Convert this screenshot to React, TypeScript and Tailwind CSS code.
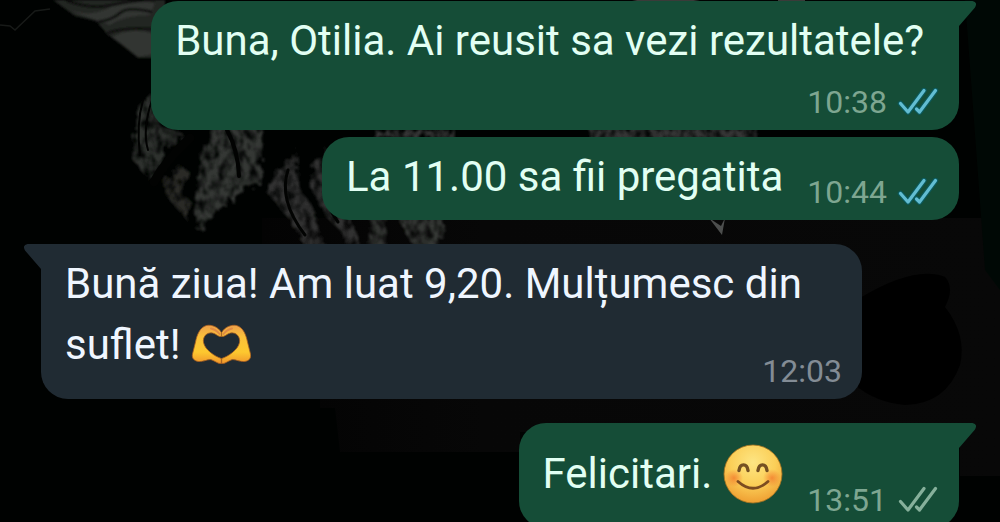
import React from "react";
import clsx from "clsx";

type Status = "read" | "delivered";

type MessageProps = {
  children: React.ReactNode;
  time: string;
  status?: Status;
  tail?: boolean;
  // where the time goes: on its own row, beside the text, or floated under the last line
  meta: "below" | "beside" | "inline";
  className?: string;
};

const Ticks: React.FC<{ status: Status }> = ({ status }) => (
  <svg
    role="img"
    aria-label={status}
    viewBox="0 0 42 28"
    className={clsx("h-7 w-[42px] shrink-0", status === "read" ? "text-[#62bdd2]" : "text-[#86b09b]")}
    fill="none"
    strokeWidth="3.2"
    strokeLinecap="round"
    strokeLinejoin="round"
  >
    {status === "read" && (
      <path d="M3.500 15.500 11 24 27 2.500M19.500 21 22.500 24 38.500 2.500" stroke="#0b5a5c" strokeWidth="5.5" />
    )}
    <path d="M3.500 15.500 11 24 27 2.500" stroke="currentColor" />
    <path d="M19.500 21 22.500 24 38.500 2.500" stroke="currentColor" />
  </svg>
);

const HeartHands = () => (
  <svg role="img" aria-label="heart hands" viewBox="0 3 60 60" className="-my-2 inline-block size-[60px] align-middle">
    <defs>
      <linearGradient id="hand" x1="0" y1="0" x2="0" y2="1">
        <stop offset="0" stopColor="#eda04a" />
        <stop offset="0.3" stopColor="#fbc13a" />
        <stop offset="0.7" stopColor="#fdc82f" />
        <stop offset="1" stopColor="#f0952c" />
      </linearGradient>
    </defs>
    {[undefined, "translate(61 0) scale(-1 1)"].map((transform, i) => (
      <g key={i} transform={transform}>
        <path
          d="M30.300 17.500C27 11.500 20 9.500 15.500 10.500C8.500 12.500 6 20 4.500 27L1.500 39C.5 43.500 3.500 46 7.500 46.500C13 47 17.500 43.500 21 45C25 46.500 27 49 30.300 48.500L30.300 43.500C24 41.500 14 35 12.500 27.500C11.500 21.500 16 17 21.500 18C25 18.500 27 22 30.300 21.500Z"
          fill="url(#hand)"
          stroke="#a95f20"
          strokeWidth="0.8"
        />
        <path d="M20 13.500Q25 14.500 28.500 19" fill="none" stroke="#e08b45" strokeWidth="2" strokeLinecap="round" />
      </g>
    ))}
  </svg>
);

const Smile = () => (
  <svg role="img" aria-label="smiling face" viewBox="0 0 60 60" className="size-[60px] shrink-0">
    <defs>
      <radialGradient id="face" cx="0.5" cy="0.3" r="0.7">
        <stop offset="0" stopColor="#fde583" />
        <stop offset="0.55" stopColor="#fbcf58" />
        <stop offset="1" stopColor="#ef9f32" />
      </radialGradient>
      <radialGradient id="cheek">
        <stop offset="0" stopColor="#f2772b" stopOpacity="0.75" />
        <stop offset="1" stopColor="#f2772b" stopOpacity="0" />
      </radialGradient>
    </defs>
    <circle cx="30" cy="30" r="29" fill="url(#face)" stroke="#a97420" strokeWidth="0.8" />
    <circle cx="11" cy="34" r="9" fill="url(#cheek)" />
    <circle cx="49" cy="34" r="9" fill="url(#cheek)" />
    <path
      d="M16 26.500C17 19 24 19 25 26.500M35 26.500C36 19 43 19 44 26.500"
      fill="none"
      stroke="#745022"
      strokeWidth="3.4"
      strokeLinecap="round"
    />
    <path d="M15 37.500Q30 51 45 37.500" fill="none" stroke="#7c4c20" strokeWidth="2.800" strokeLinecap="round" />
  </svg>
);

const Tail: React.FC<{ side: "left" | "right" }> = ({ side }) => (
  <svg
    aria-hidden="true"
    viewBox="0 0 44 28"
    className={clsx("absolute top-0 h-7 w-11", side === "right" ? "-right-[17px]" : "-left-[17px] -scale-x-100")}
    fill="currentColor"
  >
    <path d="M0 0H40.500Q46 1 43 6.500L27 25V28H0Z" />
  </svg>
);

const Message: React.FC<MessageProps> = ({ children, time, status, tail, meta, className }) => {
  const sent = Boolean(status);

  const stamp = (
    <div
      className={clsx(
        "flex shrink-0 items-center gap-[10px] text-[32px] leading-[38px]",
        sent ? "text-[#7ea691]" : "text-[#838c95]",
        meta === "inline" ? "float-right mt-[38px]" : "relative self-end",
        meta === "below" && "mt-3"
      )}
    >
      <time>{time}</time>
      {status && <Ticks status={status} />}
    </div>
  );

  return (
    <article
      className={clsx(
        "relative flex max-w-[821px] rounded-[27px] pt-[9px] pr-5 pb-[9px] pl-6",
        sent ? "self-end bg-[#154d37] text-[#154d37]" : "self-start bg-[#202b33] text-[#202b33]",
        meta === "beside" ? "items-end gap-6" : "flex-col",
        tail && (sent ? "rounded-tr-none" : "rounded-tl-none"),
        className
      )}
    >
      {tail && <Tail side={sent ? "right" : "left"} />}
      <div
        className={clsx(
          "relative flow-root text-[42px] leading-[61px]",
          sent ? "text-[#e2fff3]" : "text-[#eff6ff]",
          meta === "beside" && "mb-1"
        )}
      >
        {children}
        {meta === "inline" && stamp}
      </div>
      {meta !== "inline" && stamp}
    </article>
  );
};

const Wallpaper = () => (
  <svg aria-hidden="true" viewBox="0 0 1000 522" preserveAspectRatio="xMidYMin slice" className="absolute inset-0 size-full">
    <defs>
      <filter id="grain" x="-5%" y="-5%" width="110%" height="110%">
        <feTurbulence type="fractalNoise" baseFrequency="0.16 0.1" numOctaves="4" seed="21" result="noise" />
        <feColorMatrix in="noise" type="matrix" values="0 0 0 0 0  0 0 0 0 0  0 0 0 0 0  2.4 0 0 0 -0.5" result="mask" />
        <feDisplacementMap in="SourceGraphic" in2="noise" scale="14" result="rough" />
        <feComposite in="rough" in2="mask" operator="in" />
        <feGaussianBlur stdDeviation="0.9" />
      </filter>
      <filter id="soft">
        <feGaussianBlur stdDeviation="1.2" />
      </filter>
      <linearGradient id="haze" x1="0" y1="0" x2="1" y2="0">
        <stop offset="0" stopColor="#030303" />
        <stop offset="0.3" stopColor="#070707" />
        <stop offset="1" stopColor="#080808" />
      </linearGradient>
    </defs>
    <path d="M262 218H1000V476H960V432H520V452H340L335 408H320V260H262Z" fill="url(#haze)" />
    <path d="M965 0H1000V290L985 270Z" fill="#000805" />
    <path d="M860 298Q915 265 945 277Q955 288 945 307Q967 335 960 365Q946 404 905 405Q875 402 855 385Z" fill="#000" />

    {/* petals in the top corner */}
    <g filter="url(#soft)">
      <path d="M53 0H165V58H138L122 45L108 35L96 21L75 16Z" fill="#242523" />
      <path d="M60 5Q85 20 108 8T155 3L150 15Q125 15 110 25L78 14Z" fill="#333432" />
      <path d="M112 37Q132 26 154 34V54L138 57Z" fill="#333432" />
      <path
        d="M66 0Q90 10 112 5T155 0M98 22Q112 20 120 13T152 12M108 33Q124 27 152 29"
        fill="none"
        stroke="#070807"
        strokeWidth="2.500"
      />
    </g>

    <g filter="url(#grain)">
      <path d="M158 88Q134 104 136 130L132 158L148 180L162 166L166 150L185 135L160 125Z" fill="#2f302d" />
      <path d="M180 165L162 180L168 198L188 222L190 200L180 194L192 174Z" fill="#292a27" />
      <path d="M212 126L200 166L196 200L198 232L214 214L236 194L262 180V126Z" fill="#363734" />
      <path d="M298 148Q272 170 266 192L290 220L306 250H326L314 210L298 184Z" fill="#323330" />
      <path d="M328 150Q306 162 312 190L325 216L340 230L350 250H362L350 215L330 200Z" fill="#323330" />
      <path d="M370 215L368 250H384L386 215ZM396 215L414 246L436 250L446 228L440 215Z" fill="#363734" />
      <path d="M590 128H758V140H590ZM375 130H455V138H375Z" fill="#353634" />
    </g>
    {/* dark veins between the petals */}
    <g fill="none" stroke="#020302" strokeLinecap="round">
      <path d="M190 138Q166 160 154 182" strokeWidth="9" />
      <path d="M227 130Q238 150 239 176" strokeWidth="4" />
      <path d="M143 100Q136 125 140 155M152 100Q142 130 148 150" strokeWidth="2" />
      <path d="M288 170Q278 200 305 235M328 165Q315 190 338 222" strokeWidth="3" />
    </g>

    <path d="M709 218L722 235L725 218L721 226Z" fill="#4c4e4d" />
    <path d="M0 25L10 26L15 30L35 11L50 9" fill="none" stroke="#171a18" strokeWidth="1.500" />
    <path d="M632 0H700L690 1.500H640ZM778 0H805V1.500H778Z" fill="#3a3b39" />
  </svg>
);

export default function App() {
  return (
    <div className="relative h-screen overflow-hidden bg-[#000201] font-['Roboto',sans-serif]">
      <Wallpaper />
      <main className="relative flex flex-col px-[41px] pt-px">
        <Message time="10:38" status="read" meta="below" className="w-[88%]" tail>
          Buna, Otilia. Ai reusit sa vezi rezultatele?
        </Message>
        <Message time="10:44" status="read" meta="beside" className="mt-[7px]">
          La 11.00 sa fii pregatita
        </Message>
        <Message time="12:03" meta="inline" className="mt-6" tail>
          Bună ziua! Am luat 9,20. Mulțumesc din{" "}
          <span className="whitespace-nowrap">
            suflet! <HeartHands />
          </span>
        </Message>
        <Message time="13:51" status="delivered" meta="beside" className="mt-6" tail>
          <span className="flex h-[83px] items-center gap-[11px]">
            Felicitari. <Smile />
          </span>
        </Message>
      </main>
    </div>
  );
}
